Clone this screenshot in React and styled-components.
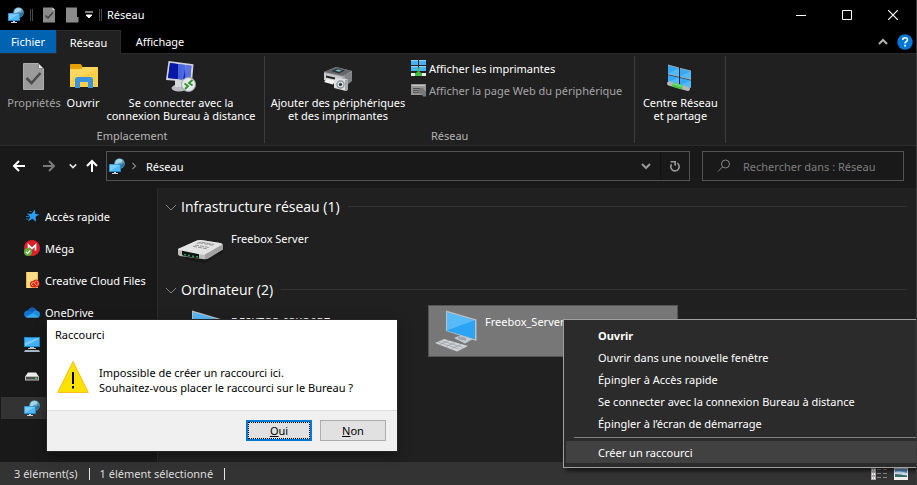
import React, { useState } from 'react';
import styled, { createGlobalStyle, css } from 'styled-components';

const GlobalStyle = createGlobalStyle`
  * {
    box-sizing: border-box;
  }
  body {
    margin: 0;
    background: #191919;
    font-family: 'Noto Sans', 'Open Sans', sans-serif;
    font-size: 11px;
    line-height: 15px;
    color: #fff;
  }
  button, input {
    font: inherit;
    color: inherit;
    margin: 0;
    padding: 0;
    border: 0;
    background: none;
    outline: none;
  }
  svg {
    display: block;
    flex: none;
  }
  ul {
    list-style: none;
    margin: 0;
    padding: 0;
  }
  h1, h2, p {
    margin: 0;
    font-weight: normal;
  }
`;

/* icons */

const NetworkIcon = ({ size = 16 }) => (
  <svg width={size} height={size} viewBox='0 0 16 16'>
    <circle cx='10.5' cy='5.5' r='5.3' fill='#5c9dbd' />
    <path d='M7 2.5q3-2.5 6.5-.5l-1 2.5-3 .5-1.500 2-2-1z' fill='#a9d6e8' />
    <path d='M12 7l2.500-2 1 1-1 3-2 1z' fill='#2f6f93' />
    <rect x='0' y='6' width='12' height='8' fill='#1c7fc4' />
    <rect x='.8' y='6.800' width='10.400' height='6.400' fill='#4fb8f7' />
    <path d='M.8 13.200V6.800h10.400z' fill='#7bccfb' />
    <path d='M5 14h2v1h2v1H3v-1h2z' fill='#c9d3da' />
  </svg>
);

const DocIcon = () => (
  <svg width='32' height='32' viewBox='0 0 32 32'>
    <path d='M5.500 3.500h15l5 5v21h-20z' fill='#9b9b9b' stroke='#adadad' />
    <path d='M20.500 3.500v5h5z' fill='#ececec' stroke='#666' strokeWidth='.6' />
    <path d='M8.500 18l5 5 9-10' fill='none' stroke='#4c4c4c' strokeWidth='2.600' />
  </svg>
);

const MiniDocIcon = ({ check }) => (
  <svg width='14' height='16' viewBox='0 0 14 16'>
    {check ? (
      <>
        <path d='M1 .5h9.500L13 3v12.500H1z' fill='#8b8b8b' />
        <path d='M10.500 .5V3H13z' fill='#ddd' />
        <path d='M3.500 8.500l2.500 2.500 5-5.500' fill='none' stroke='#3d3d3d' strokeWidth='1.500' />
      </>
    ) : (
      <path d='M1 .5h11V10h1.500v5.500H1z' fill='#8b8b8b' />
    )}
  </svg>
);

const FolderIcon = () => (
  <svg width='32' height='32' viewBox='0 0 32 32'>
    <path d='M3 5q0-1 1-1h9q1 0 1.500 1l1 2H29q2 0 2 1v3H3z' fill='#e5a000' />
    <path d='M3 9h11l2-2h14q1 0 1 1v19H3z' fill='#ffd75e' />
    <path d='M3 20L31 9v18H3z' fill='#ffcf48' />
    <path d='M8 28V19.500q0-2.500 2.500-2.500h13q2.500 0 2.500 2.500V28h-5v-6h-8v6z' fill='#3a94dd' />
  </svg>
);

const RemoteIcon = () => (
  <svg width='32' height='32' viewBox='0 0 32 32'>
    <ellipse cx='14' cy='28' rx='7.500' ry='3.500' fill='#b9bdc2' />
    <path d='M10 20h8l1 7h-9z' fill='#d5d8db' />
    <path d='M3.500 1L28.500 4.200 27 22 1 20z' fill='#cfd3d8' />
    <path d='M5 3l21.500 2.800-1.300 14.200L3 18z' fill='#1226c4' />
    <path d='M5 3l9 1.200L17 19.500l-14-1.500z' fill='#0817a5' />
    <path d='M13 4l8 1.100-3 14.500-5-.5z' fill='#6a8df0' opacity='.65' />
    <path d='M20 5l6.500 .8-1.300 14.200-5-.5z' fill='#a4bdfa' opacity='.5' />
    <circle cx='23.500' cy='24.500' r='7' fill='#e6e9ea' stroke='#9da3a6' />
    <path d='M19.500 23.500l3.500 2.500-3 3M27.500 20L24 23l3.500 2.500' fill='none' stroke='#31912f' strokeWidth='1.800' />
  </svg>
);

const PrinterIcon = () => (
  <svg width='32' height='32' viewBox='0 0 32 32'>
    <path d='M2 12l12-5 16 4v9l-9 6L2 20z' fill='#a7a9ab' />
    <path d='M2 12l12-5 16 4-9 5z' fill='#65696d' />
    <path d='M9 11l6-2.500 8 2-6 3z' fill='#27343c' />
    <path d='M13 10.500l3-1 4 1-3 1.300z' fill='#81c2ba' />
    <path d='M2 13l18 4v9L2 20z' fill='#cbcccd' />
    <path d='M4 15.500l9 2v2l-9-2z' fill='#222' />
    <path d='M5 19l8 1.500-2 4-9-2.500z' fill='#f3f3f3' />
    <path d='M22 15l8-3v9l-5 4z' fill='#808386' />
    <path d='M12 20l3-2 2 .5 9 .5v10.500l-2 1.500-12-3z' fill='#dedfe0' />
    <path d='M23 20l3-1v11l-3 1z' fill='#a4a7a9' />
    <circle cx='18.500' cy='24.500' r='4.200' fill='#8f969a' />
    <circle cx='18.500' cy='24.500' r='2.800' fill='#eceeef' />
    <circle cx='18.500' cy='24.500' r='1.700' fill='#30414c' />
  </svg>
);

const CenterIcon = () => (
  <svg width='32' height='32' viewBox='0 0 32 32'>
    <path d='M4 5l11 3v8.500L4 14z' fill='#37a8f2' />
    <path d='M16 8.300l11 2.700v8.500l-11-2.700z' fill='#37a8f2' />
    <path d='M4 15l11 2.500v7.500L4 22z' fill='#37a8f2' />
    <path d='M16 17.800l11 2.700v7.500l-11-2.700z' fill='#37a8f2' />
    <path d='M4 13.800L15 8v8.500zM16 16.600l11-5.600v8.500zM4 22l11-4.500V25zM16 25.300l11-4.800V28z' fill='#63c2fc' opacity='.65' />
    <path d='M4 5l11 3M16 8.300L27 11M4 14l11 2.500M16 16.800l11 2.700' stroke='#a8b9c2' strokeWidth='.8' />
    <path d='M5 23.500l19 5.500' stroke='#b5b7b8' strokeWidth='4' strokeLinecap='round' />
    <path d='M8.500 24.500l10 3' stroke='#45c948' strokeWidth='4.200' />
    <path d='M8.500 23.500l10 3' stroke='#8ce887' strokeWidth='1' />
  </svg>
);

const PrintersListIcon = () => (
  <svg width='16' height='16' viewBox='0 0 16 16'>
    <path d='M0 0h7v5H0zM8 0h7v5H8zM0 6h7v5H0zM8 6h7v5H8z' fill='#49b2f5' />
    <path d='M0 0h7v1H0zM8 0h7v1H8zM0 6h7v1H0zM8 6h7v1H8z' fill='#93d3fb' />
    <path d='M6.500 7.500h2V12l3 1.500V16h-8v-2.500l3-1.500z' fill='#43bd3e' />
    <path d='M0 13h4v3H0zM11 13h4v3h-4z' fill='#eee' />
  </svg>
);

const WebPageIcon = () => (
  <svg width='16' height='16' viewBox='0 0 16 16'>
    <path d='M0 2h15v11H0z' fill='#979797' />
    <path d='M1 3h13v1H1z' fill='#c4c4c4' />
    <path d='M2 6h7v1H2zM2 8h6v1H2zM2 10h6v1H2z' fill='#4b4b4b' />
    <circle cx='10.500' cy='9' r='3' fill='#777' />
    <path d='M9 8.500l2-2 4 3v5h-3z' fill='#777' />
  </svg>
);

const StarIcon = () => (
  <svg width='16' height='16' viewBox='0 0 16 16'>
    <path d='M10.800 1.500l.6 4.400 4.100.6-3.900 2.300.4 5-3.600-3.100L4 13.500l2.200-4.700L3.500 6l4.100-.2z' fill='#2a9df4' />
    <path d='M5.500 3.500h2M3 6h2M2 8.500h3.500M2 11h2.500' stroke='#2377b8' strokeWidth='1' />
  </svg>
);

const MegaIcon = () => (
  <svg width='16' height='16' viewBox='0 0 16 16'>
    <circle cx='8' cy='8' r='8' fill='#dc1f29' />
    <path d='M4.500 10.500V5L8 8.500 11.500 5v5.500' fill='none' stroke='#fff' strokeWidth='1.700' />
    <circle cx='4' cy='12' r='4' fill='#5bb13b' />
    <path d='M2 12l1.500 1.500 2.700-3' fill='none' stroke='#fff' strokeWidth='1.200' />
  </svg>
);

const CreativeIcon = () => (
  <svg width='16' height='16' viewBox='0 0 16 16'>
    <path d='M2 0h12v16H2z' fill='#fbdc84' />
    <path d='M2 0h1v16H2z' fill='#e7b94b' />
    <path d='M13 0h1v9h-1z' fill='#eac45f' />
    <path d='M6 12q0-3 3-3 1-1.500 3-1.500 3.500.3 3.500 4T12 15.500H9Q6 15.500 6 12z' fill='#da2117' />
    <path d='M9.500 13.800q-2-.2-2-1.700T9.300 10.500q1 0 3.200 3.200M10.500 11q.5-2 2-2t1.700 2.300-1.700 2.500' fill='none' stroke='#f8b07a' strokeWidth='.9' />
  </svg>
);

const CloudIcon = () => (
  <svg width='16' height='16' viewBox='0 0 16 16'>
    <path d='M4 7q1.300-4 5-3.600 2.700.3 4 3.400L9 10z' fill='#0f5fb8' />
    <path d='M0 10.200Q.2 6.700 4 6.500q1.500 0 3 1l3.500 2.200L1.500 13Q0 12 0 10.200z' fill='#1275d1' />
    <path d='M8.500 8.500Q10.500 6 13 6.800q3 .8 3 3.600 0 1.600-1 2.600L9 11z' fill='#1d8de0' />
    <path d='M1.200 13L9 9.200l6.200 3.800q-.8.800-2 .8H3.500q-1.500 0-2.300-.8z' fill='#33a9ee' />
  </svg>
);

const PcIcon = () => (
  <svg width='16' height='16' viewBox='0 0 16 16'>
    <path d='M0 1h16v10H0z' fill='#1b8ad3' />
    <path d='M1 2h14v8H1z' fill='#45b2f6' />
    <path d='M1 10V7l12-5h2v1z' fill='#7bcbfb' />
    <path d='M6 11h4v1h2v1H4v-1h2z' fill='#bcc7cf' />
    <path d='M1 14h14l1 2H0z' fill='#a5b9c6' />
  </svg>
);

const DriveIcon = () => (
  <svg width='16' height='16' viewBox='0 0 16 16'>
    <path d='M4 4.500h8L14.500 8h-13z' fill='#eee' />
    <path d='M1 8h14v4.500H1z' fill='#bdbdbd' />
    <path d='M2 9h12v2.500H2z' fill='#4e4e4e' />
    <path d='M11 9.500h2v1.500h-2z' fill='#32dc3e' />
  </svg>
);

const RouterIcon = () => (
  <svg width='48' height='32' viewBox='0 0 48 32'>
    <path d='M1 17v6l8 5 18 3 18-10v-6z' fill='#111' opacity='.5' />
    <path d='M0 17l19-8.500q2-.6 4-.4l19 3q3 .4 3 2v4L30 26.500q-2 1-4 .7L2 24q-2-.5-2-2z' fill='#bdbdbd' />
    <path d='M0 17l19-8.500q2-.6 4-.4l19 3q3 .6 1 2L28 22q-2 1-5 .5L1 18z' fill='#e4e4e4' />
    <path d='M27 22.500l18-10v5L30 26.500l-3 .7z' fill='#a0a0a0' />
    <path d='M4 18.800l17 3.400v4.300L6 24q-2-.5-2-2z' fill='#101514' />
    <path d='M7 22v1.500M11 22.700v1.500M15 23.400v1.500M19 24v1.500' stroke='#38c767' strokeWidth='1.500' />
    <path d='M19 11.500l4-1.500 13 2.500M17 13l14 2.500M21 10.800l14 2.500M15 14.300l14 2.500' fill='none' stroke='#8c8c8c' strokeWidth='.9' strokeDasharray='4 1' />
  </svg>
);

const ComputerIcon = () => (
  <svg width='48' height='48' viewBox='0 0 48 48'>
    <path d='M22 31l7-3 12 4-8 4.500z' fill='#c6cbd0' />
    <path d='M26 29l8 2v3l-8-2z' fill='#9ea6ad' />
    <path d='M14 3.500l30.500 9V34L14 24z' fill='#b9c1c8' />
    <path d='M15 5.500L43 13.500V32L15 23.500z' fill='#1e9bf0' />
    <path d='M15 5.500L43 13.500 15 23.500z' fill='#57bbf9' />
    <path d='M43 13.500L25 20l-10 3.500L43 32z' fill='#2ba4f5' />
    <path d='M3 36l9-4 24 7-11 5.500z' fill='#d0d4d8' />
    <path d='M6 35l21 7M9 33.500l22 7M8 37.500l9-4M14 39.500l9-4M20 41.500l9-4' stroke='#8f959b' strokeWidth='.6' />
  </svg>
);

const Chevron = ({ d = 'M1 3l4 4 4-4', color = '#ccc', size = 10, weight = 2 }) => (
  <svg width={size} height={size} viewBox='0 0 10 10'>
    <path d={d} fill='none' stroke={color} strokeWidth={weight} />
  </svg>
);

const Arrow = ({ turn = 0, color = '#fff' }) => (
  <svg width='14' height='14' viewBox='0 0 14 14'>
    <path d='M13 7H2M7 2L2 7l5 5' fill='none' stroke={color} strokeWidth='2' transform={`rotate(${turn} 7 7)`} />
  </svg>
);

const WarningIcon = () => (
  <svg width='32' height='34' viewBox='0 0 32 34'>
    <path d='M16 1.500L31.300 32.500H.7z' fill='#fde100' stroke='#f9bd1f' />
    <path d='M15 12h2v12h-2zM15 26h2v2.500h-2z' fill='#000' />
  </svg>
);

/* window chrome */

const Window = styled.div`
  position: relative;
  display: flex;
  flex-direction: column;
  min-height: 100vh;
  overflow: hidden;
  border-right: 1px solid #3a3a3a;
`;

const TitleBar = styled.header`
  display: flex;
  align-items: center;
  height: 30px;
  padding: 0 0 1px 8px;
  background: #000;
`;

const QuickAccess = styled.div`
  display: flex;
  align-items: center;
  gap: 6px;
  margin-right: 5px;
`;

const Tick = styled.span`
  width: 3px;
  height: 12px;
  border: solid #4a4a4a;
  border-width: 0 1px;
`;

const IconButton = styled.button`
  display: flex;
  align-items: center;
  justify-content: center;
  width: ${(p) => p.$w || 16}px;
  height: ${(p) => p.$h || 16}px;
  ${(p) => p.$line && css`border-left: 1px solid #111;`}
`;

const WindowButtons = styled.div`
  display: flex;
  margin-left: auto;
`;

const TabBar = styled.nav`
  display: flex;
  height: 24px;
  background: #000;
`;

const Tab = styled.button`
  min-width: ${(p) => p.$w}px;
  border: solid #2b2b2b;
  border-width: 0 0 1px;
  ${(p) => p.$file && css`background: #0063b1;`}
  ${(p) => p.$active && css`
    background: #202020;
    border-width: 1px 1px 0;
  `}
`;

const TabRest = styled.div`
  display: flex;
  flex: 1;
  align-items: center;
  justify-content: flex-end;
  gap: 9px;
  padding-right: 3px;
  border-bottom: 1px solid #2b2b2b;
`;

const Ribbon = styled.div`
  display: flex;
  height: 92px;
  padding-top: 2px;
  background: #202020;
  border-bottom: 1px solid #2b2b2b;
`;

const RibbonGroup = styled.section`
  display: flex;
  flex-direction: column;
  height: 87px;
  padding: 4px 4px 0;
  border-right: 1px solid #3c3c3c;
`;

const RibbonItems = styled.div`
  display: flex;
  flex: 1;
`;

const RibbonLabel = styled.h2`
  height: 15px;
  font-size: inherit;
  line-height: 15px;
  color: #b4b4b4;
  text-align: center;
`;

const BigButton = styled.button`
  display: flex;
  flex-direction: column;
  align-items: center;
  gap: 4px;
  width: ${(p) => p.$w}px;
  line-height: 13px;
  white-space: pre;
  color: ${(p) => (p.disabled ? '#a5a5a5' : '#fff')};
`;

const SmallStack = styled.div`
  display: flex;
  flex-direction: column;
  padding: 0 8px 0 4px;
`;

const SmallButton = styled.button`
  display: flex;
  align-items: center;
  gap: 2px;
  height: 22px;
  padding-bottom: 6px;
  white-space: nowrap;
  color: ${(p) => (p.disabled ? '#a5a5a5' : '#fff')};
`;

const AddressRow = styled.div`
  display: flex;
  align-items: center;
  height: 42px;
  padding: 0 12px 2px 8px;
`;

const AddressBox = styled.div`
  display: flex;
  flex: 1;
  align-items: center;
  height: 30px;
  padding-left: 2px;
  border: 1px solid #535353;
`;

const Crumb = styled.button`
  margin-left: 3px;
  margin-right: auto;
`;

const SearchBox = styled.label`
  display: flex;
  align-items: center;
  gap: 12px;
  width: 202px;
  height: 30px;
  margin-left: 12px;
  padding-left: 14px;
  border: 1px solid #535353;

  input {
    flex: 1;
    min-width: 0;
  }
  input::placeholder {
    color: #7d7d7d;
    opacity: 1;
  }
`;

/* body */

const Body = styled.div`
  display: flex;
  flex: 1;
`;

const Sidebar = styled.nav`
  width: 158px;
  padding-top: 17px;
  border-right: 1px solid #2b2b2b;
`;

const SideLink = styled.a`
  display: flex;
  align-items: center;
  gap: 5px;
  height: 22px;
  margin: 0 0 10px 1px;
  padding-left: 23px;
  color: #fff;
  text-decoration: none;
  white-space: nowrap;
  background: ${(p) => (p.$active ? '#333' : 'none')};
`;

const Content = styled.main`
  flex: 1;
  padding: 3px 10px 0 8px;
  background: #202020;
`;

const GroupHeader = styled.h2`
  display: flex;
  align-items: center;
  gap: 5px;
  height: 31px;
  font-family: 'Open Sans', sans-serif;
  font-size: 14px;
  line-height: 20px;

  &::after {
    content: '';
    flex: 1;
    height: 1px;
    margin-left: 3px;
    background: #333;
  }
`;

const Tiles = styled.div`
  display: flex;
  gap: 4px;
  padding-left: 8px;
`;

const Tile = styled.button`
  display: flex;
  gap: 5px;
  width: 250px;
  height: 52px;
  padding: 1px 3px;
  border: 1px solid transparent;
  text-align: left;
  ${(p) => p.$selected && css`
    background: #777;
    border-color: #555;
  `}

  svg {
    align-self: center;
  }
  span {
    padding-top: 7px;
  }
`;

const StatusBar = styled.footer`
  display: flex;
  align-items: center;
  height: 23px;
  padding: 0 7px 0 14px;
  background: #333;
  color: #dcdcdc;
`;

const StatusItem = styled.span`
  padding-right: 11px;
  margin-right: 10px;
  line-height: 12px;
  border-right: 1px solid #e5e5e5;
`;

const ViewButtons = styled.div`
  display: flex;
  gap: 6px;
  margin-left: auto;
`;

/* things floating over the window */

const Dialog = styled.div`
  position: absolute;
  left: 47px;
  top: 320px;
  width: 350px;
  background: #fff;
  color: #000;
  box-shadow: 0 0 0 1px #262626, 0 4px 12px rgba(0, 0, 0, 0.4);

  h1 {
    padding: 7px 8px 8px;
    font-size: inherit;
    line-height: 15px;
  }
`;

const DialogMessage = styled.div`
  display: flex;
  gap: 10px;
  height: 60px;
  padding: 10px;

  p {
    padding-top: 5px;
    white-space: pre;
  }
`;

const DialogFooter = styled.div`
  display: flex;
  justify-content: flex-end;
  gap: 8px;
  padding: 9px 11px 10px;
  background: #f0f0f0;
  border-top: 1px solid #dfdfdf;
`;

const DialogButton = styled.button`
  width: 66px;
  height: 21px;
  line-height: 15px;
  background: #e1e1e1;
  border: 1px solid #adadad;
  ${(p) => p.$primary && css`
    border: 2px solid #0078d7;
    outline: 1px dotted #000;
    outline-offset: -3px;
  `}
`;

const Menu = styled.ul`
  position: absolute;
  left: 563px;
  right: -1px;
  top: 319px;
  padding: 4px 0 4px 2px;
  background: #2b2b2b;
  border: 1px solid #a0a0a0;
  border-right: 0;
  box-shadow: 3px 3px 4px rgba(0, 0, 0, 0.6);
`;

const MenuItem = styled.button`
  display: block;
  width: 100%;
  height: 22px;
  padding-left: 32px;
  text-align: left;
  font-weight: ${(p) => (p.$bold ? 700 : 400)};
  background: ${(p) => (p.$hot ? '#414141' : 'none')};
`;

const MenuLine = styled.li`
  height: 1px;
  margin: 3px 0 3px 8px;
  background: #808080;
`;

const places = [
  { label: 'Accès rapide', Icon: StarIcon },
  { label: 'Méga', Icon: MegaIcon },
  { label: 'Creative Cloud Files', Icon: CreativeIcon },
  { label: 'OneDrive', Icon: CloudIcon },
  { title: 'Ce PC', Icon: PcIcon },
  { title: 'Lecteur', Icon: DriveIcon },
  { title: 'Réseau', Icon: NetworkIcon, active: true },
];

const actions = [
  'Ouvrir',
  'Ouvrir dans une nouvelle fenêtre',
  'Épingler à Accès rapide',
  'Se connecter avec la connexion Bureau à distance',
  'Épingler à l’écran de démarrage',
];

const App = () => {
  const [query, setQuery] = useState('');

  return (
    <>
      <GlobalStyle />
      <Window>
        <TitleBar>
          <QuickAccess>
            <NetworkIcon />
            <Tick />
            <IconButton $w={20} aria-label='Propriétés'><MiniDocIcon check /></IconButton>
            <IconButton $w={14} aria-label='Nouveau dossier'><MiniDocIcon /></IconButton>
            <IconButton $w={8} aria-label='Personnaliser'>
              <svg width='8' height='8' viewBox='0 0 8 8'><path d='M0 1h8M1 4h6L4 7z' fill='#fff' stroke='#fff' strokeWidth='1' /></svg>
            </IconButton>
            <Tick />
          </QuickAccess>
          <span>Réseau</span>
          <WindowButtons>
            <IconButton $w={46} $h={28} aria-label='Réduire'>
              <svg width='10' height='10' viewBox='0 0 10 10'><path d='M0 5.500h10' stroke='#fff' /></svg>
            </IconButton>
            <IconButton $w={46} $h={28} aria-label='Agrandir'>
              <svg width='10' height='10' viewBox='0 0 10 10'><path d='M.5 .5h9v9h-9z' fill='none' stroke='#fff' /></svg>
            </IconButton>
            <IconButton $w={46} $h={28} aria-label='Fermer'>
              <svg width='10' height='10' viewBox='0 0 10 10'><path d='M0 0l10 10M10 0L0 10' stroke='#fff' strokeWidth='1.200' /></svg>
            </IconButton>
          </WindowButtons>
        </TitleBar>

        <TabBar>
          <Tab $w={56} $file>Fichier</Tab>
          <Tab $w={65} $active>Réseau</Tab>
          <Tab $w={78}>Affichage</Tab>
          <TabRest>
            <IconButton $w={10} aria-label='Réduire le ruban'><Chevron d='M1 7l4-4 4 4' color='#b5b5b5' /></IconButton>
            <IconButton aria-label='Aide'>
              <svg width='16' height='16' viewBox='0 0 16 16'>
                <circle cx='8' cy='8' r='7.700' fill='#0078d7' />
                <path d='M5.700 6q0-2.300 2.400-2.300T10.400 5.800q0 1.200-1.200 1.900T8 9.500' fill='none' stroke='#fff' strokeWidth='1.600' />
                <path d='M7.200 10.800h1.700v1.700H7.200z' fill='#fff' />
              </svg>
            </IconButton>
          </TabRest>
        </TabBar>

        <Ribbon>
          <RibbonGroup>
            <RibbonItems>
              <BigButton $w={60} disabled><DocIcon />Propriétés</BigButton>
              <BigButton $w={38}><FolderIcon />Ouvrir</BigButton>
              <BigButton $w={158}><RemoteIcon />{'Se connecter avec la\nconnexion Bureau à distance'}</BigButton>
            </RibbonItems>
            <RibbonLabel>Emplacement</RibbonLabel>
          </RibbonGroup>
          <RibbonGroup>
            <RibbonItems>
              <BigButton $w={138}><PrinterIcon />{'Ajouter des périphériques\net des imprimantes'}</BigButton>
              <SmallStack>
                <SmallButton><PrintersListIcon />Afficher les imprimantes</SmallButton>
                <SmallButton disabled><WebPageIcon />Afficher la page Web du périphérique</SmallButton>
              </SmallStack>
            </RibbonItems>
            <RibbonLabel>Réseau</RibbonLabel>
          </RibbonGroup>
          <RibbonGroup>
            <RibbonItems>
              <BigButton $w={82}><CenterIcon />{'Centre Réseau\net partage'}</BigButton>
            </RibbonItems>
          </RibbonGroup>
        </Ribbon>

        <AddressRow>
          <IconButton $w={22} aria-label='Précédent'><Arrow /></IconButton>
          <IconButton $w={38} aria-label='Suivant'><Arrow turn={180} color='#7a7a7a' /></IconButton>
          <IconButton $w={10} aria-label='Emplacements récents'><Chevron size={8} color='#e0e0e0' /></IconButton>
          <IconButton $w={28} aria-label='Dossier parent'><Arrow turn={90} /></IconButton>
          <AddressBox>
            <NetworkIcon />
            <IconButton $w={18} aria-label='Développer'><Chevron size={8} d='M3 1l4 4-4 4' color='#8a8a8a' weight={1.5} /></IconButton>
            <Crumb>Réseau</Crumb>
            <IconButton $w={28} aria-label='Historique'><Chevron color='#999' /></IconButton>
            <IconButton $w={29} $h={28} $line aria-label='Actualiser'>
              <svg width='12' height='12' viewBox='0 0 12 12'>
                <path d='M8.300 3.200A4.200 4.200 0 1 1 2.600 4.200M1.500 1.700h4.700v4' fill='none' stroke='#999' strokeWidth='1.600' />
              </svg>
            </IconButton>
          </AddressBox>
          <SearchBox>
            <svg width='14' height='14' viewBox='0 0 14 14'>
              <circle cx='8.500' cy='5' r='4' fill='none' stroke='#888' />
              <path d='M5.500 8L1 12.500' stroke='#888' />
            </svg>
            <input
              aria-label='Rechercher'
              placeholder='Rechercher dans : Réseau'
              value={query}
              onChange={(e) => setQuery(e.target.value)}
            />
          </SearchBox>
        </AddressRow>

        <Body>
          <Sidebar>
            {places.map(({ label, title, Icon, active }) => (
              <SideLink key={label || title} href='#' aria-label={title} $active={active}><Icon />{label}</SideLink>
            ))}
          </Sidebar>
          <Content>
            <GroupHeader><Chevron d='M0 3l5 5 5-5' weight={1} color='#808080' />Infrastructure réseau (1)</GroupHeader>
            <Tiles>
              <Tile><RouterIcon /><span>Freebox Server</span></Tile>
            </Tiles>
            <GroupHeader><Chevron d='M0 3l5 5 5-5' weight={1} color='#808080' />Ordinateur (2)</GroupHeader>
            <Tiles>
              <Tile><ComputerIcon /><span>DESKTOP-03KO0B7</span></Tile>
              <Tile $selected><ComputerIcon /><span>Freebox_Server</span></Tile>
            </Tiles>
          </Content>
        </Body>

        <StatusBar>
          <StatusItem>3 élément(s)</StatusItem>
          <StatusItem>1 élément sélectionné</StatusItem>
          <ViewButtons>
            <IconButton aria-label='Détails'>
              <svg width='16' height='12' viewBox='0 0 16 12'>
                <path d='M0 0h5v12H0z' fill='#aaa' />
                <path d='M1 1h3v2H1zM1 5h3v2H1zM1 9h3v2H1z' fill='#fff' />
                <path d='M2 1.500h1v1H2zM2 5.500h1v1H2z' fill='#2b6fb5' />
                <path d='M2 9.500h1v1H2z' fill='#c33' />
                <path d='M6 1.500h4M12 1.500h4M6 5.500h4M12 5.500h4M6 9.500h4M12 9.500h4' stroke='#888' />
              </svg>
            </IconButton>
            <IconButton aria-label='Grandes icônes'>
              <svg width='14' height='12' viewBox='0 0 14 12'>
                <path d='M0 0h14v12H0z' fill='#eee' />
                <path d='M1 1h12v8H1z' fill='#5a9bd8' />
                <path d='M1 4q4-2 12 1v2H1z' fill='#cfe5f5' />
                <path d='M1 6q6 0 12 2v1H1z' fill='#3b6b62' />
              </svg>
            </IconButton>
          </ViewButtons>
        </StatusBar>

        <Dialog role='dialog' aria-label='Raccourci'>
          <h1>Raccourci</h1>
          <DialogMessage>
            <WarningIcon />
            <p>{'Impossible de créer un raccourci ici.\nSouhaitez-vous placer le raccourci sur le Bureau ?'}</p>
          </DialogMessage>
          <DialogFooter>
            <DialogButton $primary><u>O</u>ui</DialogButton>
            <DialogButton><u>N</u>on</DialogButton>
          </DialogFooter>
        </Dialog>

        <Menu>
          {actions.map((label, i) => (
            <li key={label}><MenuItem $bold={i === 0}>{label}</MenuItem></li>
          ))}
          <MenuLine role='separator' />
          <li><MenuItem $hot>Créer un raccourci</MenuItem></li>
        </Menu>
      </Window>
    </>
  );
};

export default App;
